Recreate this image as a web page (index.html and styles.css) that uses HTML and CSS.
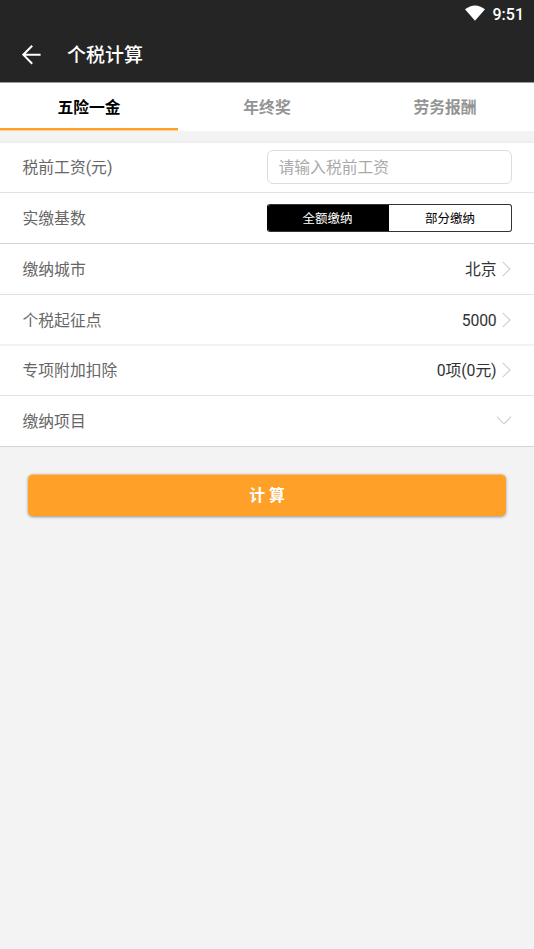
FILE: index.html
```html
<!DOCTYPE html>
<html lang="zh-CN">
<head>
<meta charset="utf-8">
<title>个税计算</title>
<link rel="stylesheet" href="styles.css">
</head>
<body>
<header class="header">
  <div class="status">
    <svg class="wifi" viewBox="0 0 20 16"><path d="M0 4.2Q10-3.4 20 4.2L10 15.8Z" fill="#fff"/></svg>
    <span class="clock">9:51</span>
  </div>
  <div class="toolbar">
    <svg class="back" viewBox="0 0 20 20" fill="none" stroke="#fff" stroke-width="2"><path d="M18.6 9.7H1.6M10.2 .7L1.3 9.7L10.2 18.7"/></svg>
    <h1 class="title">个税计算</h1>
  </div>
</header>
<nav class="tabs">
  <div class="tab active">五险一金</div>
  <div class="tab">年终奖</div>
  <div class="tab">劳务报酬</div>
</nav>
<main>
  <div class="list">
    <div class="row short first"><span class="label">税前工资(元)</span><input class="input" placeholder="请输入税前工资"></div>
    <div class="row dark"><span class="label">实缴基数</span><div class="segment"><span class="option selected">全额缴纳</span><span class="option">部分缴纳</span></div></div>
    <div class="row"><span class="label">缴纳城市</span><span class="value">北京</span><svg class="chevron" viewBox="0 0 9 16"><path d="M.7 .9L8 8L.7 15.1"/></svg></div>
    <div class="row soft"><span class="label">个税起征点</span><span class="value number">5000</span><svg class="chevron" viewBox="0 0 9 16"><path d="M.7 .9L8 8L.7 15.1"/></svg></div>
    <div class="row short"><span class="label">专项附加扣除</span><span class="value tight">0项(0元)</span><svg class="chevron" viewBox="0 0 9 16"><path d="M.7 .9L8 8L.7 15.1"/></svg></div>
    <div class="row dark"><span class="label">缴纳项目</span><svg class="chevron down" viewBox="0 0 16 9"><path d="M.9 .7L8 8L15.1 .7"/></svg></div>
  </div>
  <button class="submit">计 算</button>
</main>
</body>
</html>
```
FILE: styles.css
```css
* { box-sizing: border-box; }
body {
  margin: 0;
  min-height: 949px;
  background: #f3f3f3;
  font-family: Roboto, "Noto Sans CJK SC", sans-serif;
  font-size: 15.8px;
}
.header { height: 82px; background: #252525; color: #fff; }
.status {
  height: 28px;
  padding-right: 10px;
  display: flex;
  align-items: center;
  justify-content: flex-end;
}
.wifi { width: 20px; height: 16px; margin: 0 8px 2px 0; }
.clock { padding-top: 2px; font-size: 16px; font-weight: 500; line-height: 28px; }
.toolbar { height: 54px; padding-left: 22px; display: flex; align-items: center; }
.back { width: 20px; height: 20px; margin-right: 25px; }
.title { margin: 0; padding-top: 2px; font-size: 19px; font-weight: 500; line-height: 54px; }
.tabs {
  height: 49px;
  display: flex;
  background: #fff;
  border-top: 1px solid #999;
}
.tab {
  flex: 1;
  padding-top: 1px;
  text-align: center;
  line-height: 48px;
  font-weight: 700;
  color: #949494;
}
.tab.active { color: #000; box-shadow: inset 0 -1px #ffd08f, inset 0 -3px #ffa028; }
.list { margin-top: 10px; border-top: 2px solid #eee; }
.row {
  height: 51px;
  padding: 0 22px 0 22.5px;
  display: flex;
  align-items: center;
  background: #fff;
  border-bottom: 1px solid #e2e2e2;
  color: #666;
}
.row.short { height: 50px; }
.row.dark { border-bottom-color: #d4d4d4; }
.row.soft { border-bottom: 2px solid #f2f2f2; }
.label, .value { padding-bottom: 2px; }
.label { flex: 1; }
.row.soft .label { padding-bottom: 0; }
.row.short .label, .row.short .value { padding-bottom: 2px; }
.value { color: #333; }
.value.number { padding: 1px 0 0; letter-spacing: -.2px; }
.value.tight { letter-spacing: -.1px; }
.input {
  width: 245px;
  height: 34px;
  margin-bottom: 2px;
  padding: 2px 10.5px 0;
  border: 1px solid #ddd;
  border-radius: 6px;
  background: #fff;
  font: inherit;
}
.input::placeholder { color: #aaa; opacity: 1; }
.segment {
  width: 245px;
  height: 28px;
  display: flex;
  border: 1px solid #333;
  border-left-color: #000;
  border-radius: 3px;
  overflow: hidden;
  background: #fff;
}
.option {
  width: 122px;
  padding-top: 1px;
  text-align: center;
  font-size: 12.5px;
  line-height: 26px;
  color: #000;
}
.option.selected { width: 121px; padding-right: 2px; background: #000; color: #fff; }
.chevron {
  width: 9px;
  height: 16px;
  margin: 0 1px 0 5.5px;
  fill: none;
  stroke: #d0d0d0;
  stroke-width: 1.2;
}
.row.short .chevron { margin-bottom: 1px; }
.chevron.down { width: 16px; height: 9px; margin-right: 0; margin-bottom: 2px; }
.submit {
  display: block;
  width: 478px;
  height: 42px;
  margin: 27px auto 0;
  padding: 0 0 3px;
  border: 0;
  border-top: 1px solid #f3c183;
  border-radius: 5px;
  background: #ffa028;
  box-shadow: 0 1px 3px rgba(0, 0, 0, .4);
  color: #fff;
  font: inherit;
  font-weight: 700;
}
```
